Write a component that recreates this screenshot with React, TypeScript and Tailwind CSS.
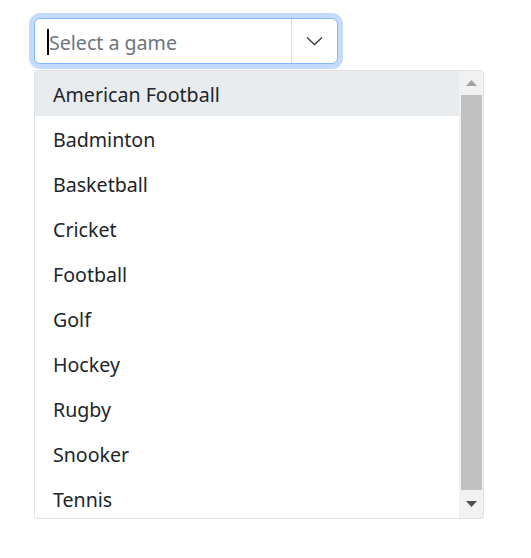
import React from "react";

const GAMES = [
  "American Football",
  "Badminton",
  "Basketball",
  "Cricket",
  "Football",
  "Golf",
  "Hockey",
  "Rugby",
  "Snooker",
  "Tennis",
];

export default function App() {
  return (
    <div className="w-[531px] h-[558px] bg-white pt-[18px] pl-[34px] font-['Noto_Sans',sans-serif] text-[#212529]">
      {/* combobox input, focused */}
      <div className="w-[304px] h-[46px] flex rounded-[6px] border border-[#86b7fe] shadow-[0_0_0_5px_#c2dbfe] bg-white">
        <div className="flex-1 flex items-center pl-[12px] pt-[3px]">
          <span className="w-[2px] h-[26px] bg-black -mt-[2px]" />
          <span className="text-[19.6px] text-[#6c757d] leading-none">Select a game</span>
        </div>
        <div className="w-[46px] border-l border-[#dee2e6] flex items-center justify-center">
          <svg width="17" height="10" viewBox="0 0 17 10" fill="none">
            <path d="M1 1.5l7.5 7 7.5-7" stroke="#343a40" strokeWidth="1.3" />
          </svg>
        </div>
      </div>

      {/* dropdown popup */}
      <div className="mt-[6px] w-[450px] h-[449px] border border-[#dee2e6] rounded-[3px] flex overflow-hidden bg-white">
        <ul className="flex-1 flex flex-col">
          {GAMES.map((g, i) => (
            <li
              key={g}
              className={`h-[45px] shrink-0 flex items-center pl-[18px] pt-[2px] text-[19.6px] ${
                i === 0 ? "bg-[#e9ecef]" : ""
              }`}
            >
              {g}
            </li>
          ))}
        </ul>
        {/* scrollbar */}
        <div className="w-[24px] bg-[#f1f1f1] flex flex-col items-center">
          <div className="h-[24px] flex items-center justify-center">
            <svg width="11" height="6" viewBox="0 0 11 6">
              <path d="M5.5 0L11 6H0z" fill="#a3a3a3" />
            </svg>
          </div>
          <div className="w-[21px] flex-1 bg-[#c1c1c1]" />
          <div className="h-[28px] flex items-center justify-center">
            <svg width="11" height="6" viewBox="0 0 11 6">
              <path d="M0 0h11L5.5 6z" fill="#505050" />
            </svg>
          </div>
        </div>
      </div>
    </div>
  );
}
